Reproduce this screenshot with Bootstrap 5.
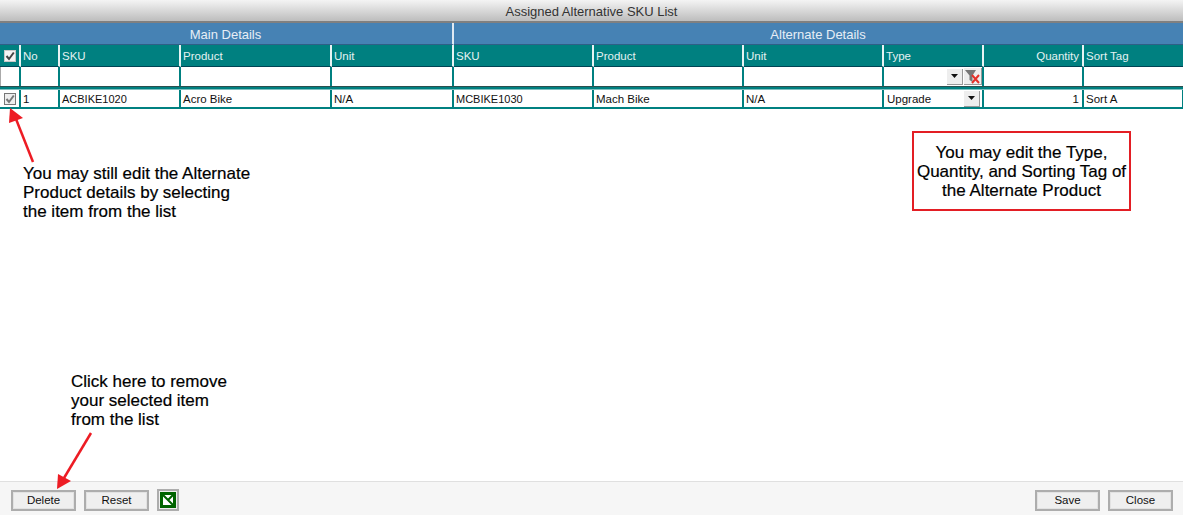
<!DOCTYPE html>
<html lang="en">
<head>
<meta charset="utf-8">
<title>Assigned Alternative SKU List</title>
<link rel="stylesheet" href="https://cdn.jsdelivr.net/npm/bootstrap@5.3.0/dist/css/bootstrap.min.css">
<style>
html,body{height:100%;margin:0}
body{width:1183px;height:515px;overflow:hidden;position:relative;background:#fff;font-family:"Liberation Sans",Arial,sans-serif;font-size:11.5px;color:#111}
.wnd-title{height:23px;background:linear-gradient(#f4f4f4,#bdbdbd);border-bottom:2px solid #808080;color:#333;font-size:13px;line-height:24px;text-align:center;box-sizing:border-box}
.sku-grid{width:1183px;table-layout:fixed;border-collapse:separate;border-spacing:0;line-height:14px}
.sku-grid th,.sku-grid td{padding:0 3px 0 2px;font-weight:400;overflow:hidden;white-space:nowrap;box-sizing:border-box;vertical-align:middle}
.sku-grid .band th{height:22px;padding-top:2px;background:#4682b4;color:#e6eef6;font-size:13px;text-align:center;border-right:2px solid #dfe9f2;border-bottom:1px solid #2f5f86}
.sku-grid .band th:last-child{border-right:0}
.sku-grid .heads th{height:22px;background:#008080;color:#e4f2f2;border-right:2px solid #e8f3f3;border-bottom:1px solid #045}
.sku-grid .heads th:last-child{border-right:0}
.sku-grid .heads th.cell-flush{padding:0}
.filters td{height:19px;background:#fff;border-right:2px solid #008080}
.filters td:last-child{border-right:0}
.filters td:first-child{border-left:1px solid #aaa}
.gap td{height:4px;background:#008080;border-top:1px solid #2b4f4f;border-bottom:1px solid #7fbfbf}
.sku-grid .gap td{padding:0}
.sku-grid .items td{height:19px;padding-top:1px;border-right:2px solid #008080;border-bottom:2px solid #008080}
.sku-grid .items td:last-child{border-right:1px solid #008080}
.sku-grid .cell-flush,.sku-grid .items td.cell-flush{padding:0}
.tick{display:block;width:12px;height:12px;margin:0 auto;border:1px solid #777;background:#eee}
.tick svg{display:block}
.heads .tick{background:#f4f4f4;border-color:#c8c8c8}
.combo{display:flex;justify-content:flex-end;align-items:center;gap:1px;height:100%}
.type-row{display:flex;align-items:center;justify-content:space-between;padding:0 2px 0 3px}
.drop{width:16px;height:16px;background:#eee;border-right:1px solid #999;border-bottom:1px solid #999;display:flex;align-items:center;justify-content:center}
.drop-wide{width:18px;height:17px}
.drop svg{display:block}
.txt-r{text-align:right}
.sku-code{font-size:11px}
.note{position:absolute;font-size:17px;line-height:19px;color:#000;margin:0;-webkit-text-stroke:.2px #000}
.note-a{left:23px;top:164px;width:232px}
.note-b{left:71px;top:372px;width:165px}
.note-c{left:912px;top:131px;width:219px;height:80px;border:2px solid #e31e24;text-align:center;padding-top:10px;background:#fff}
.arrow{position:absolute;left:0;top:0;pointer-events:none}
.foot{position:absolute;left:0;right:0;bottom:0;height:34px;background:#f6f6f6;border-top:1px solid #e0e0e0;padding:8px 10px 0 11px;box-sizing:border-box}
.foot-btn{width:65px;height:21px;padding:0;font-size:11.5px;line-height:17px;color:#111;background:#efefef;border:2px solid #adadad;border-radius:0;box-shadow:inset 0 0 0 1px #e2e2e2}
.xl-btn{width:22px;height:22px;padding:0;background:#efefef;border:2px solid #adadad;border-radius:0;display:flex;align-items:center;justify-content:center;margin-top:-1px}
</style>
</head>
<body>
<div class="wnd-title">Assigned Alternative SKU List</div>
<table class="sku-grid">
<colgroup>
<col style="width:21px"><col style="width:39px"><col style="width:121px"><col style="width:151px"><col style="width:122px"><col style="width:140px"><col style="width:150px"><col style="width:140px"><col style="width:100px"><col style="width:100px"><col style="width:99px">
</colgroup>
<tr class="band"><th colspan="5">Main Details</th><th colspan="6">Alternate Details</th></tr>
<tr class="heads">
<th class="cell-flush"><span class="tick"><svg width="10" height="10" viewBox="0 0 10 10"><path d="M1.500 5 4 8 8.800 1.500" fill="none" stroke="#444" stroke-width="2"/></svg></span></th>
<th>No</th><th>SKU</th><th>Product</th><th>Unit</th><th>SKU</th><th>Product</th><th>Unit</th><th>Type</th><th class="txt-r">Quantity</th><th>Sort Tag</th>
</tr>
<tr class="filters">
<td></td><td></td><td></td><td></td><td></td><td></td><td></td><td></td>
<td class="cell-flush"><div class="combo"><span class="drop"><svg width="7" height="4" viewBox="0 0 7 4"><path d="M0 0h7L3.500 4z" fill="#111"/></svg></span><span class="drop drop-wide"><svg width="16" height="15" viewBox="0 0 16 15"><path d="M0 1h11L7.500 6.500V13L4.500 11V6.500z" fill="#777"/><path d="M7 6l7 8M14 6l-7 8" stroke="#e5312a" stroke-width="2"/></svg></span></div></td>
<td></td><td></td>
</tr>
<tr class="gap"><td colspan="11"></td></tr>
<tr class="items">
<td class="cell-flush"><span class="tick"><svg width="10" height="10" viewBox="0 0 10 10"><path d="M1.500 5 4 8 8.800 1.500" fill="none" stroke="#777" stroke-width="2"/></svg></span></td>
<td>1</td><td class="sku-code">ACBIKE1020</td><td>Acro Bike</td><td>N/A</td><td class="sku-code">MCBIKE1030</td><td>Mach Bike</td><td>N/A</td>
<td class="cell-flush"><div class="type-row">Upgrade<span class="drop"><svg width="7" height="4" viewBox="0 0 7 4"><path d="M0 0h7L3.500 4z" fill="#111"/></svg></span></div></td>
<td class="txt-r">1</td><td>Sort A</td>
</tr>
</table>

<p class="note note-a">You may still edit the Alternate Product details by selecting the item from the list</p>
<p class="note note-b">Click here to remove your selected item from the list</p>
<p class="note note-c">You may edit the Type, Quantity, and Sorting Tag of the Alternate Product</p>

<div class="foot d-flex">
<button class="btn foot-btn me-2" type="button">Delete</button>
<button class="btn foot-btn me-2" type="button">Reset</button>
<button class="btn xl-btn" type="button" aria-label="Export to Excel"><svg width="16" height="16" viewBox="0 0 16 16"><rect width="16" height="16" fill="#006400"/><rect x="3" y="3" width="10" height="10" fill="#fff"/><path d="M3 3l10 10M13 3 8 8" stroke="#006400" stroke-width="2"/></svg></button>
<div class="ms-auto d-flex gap-2">
<button class="btn foot-btn" type="button">Save</button>
<button class="btn foot-btn" type="button">Close</button>
</div>
</div>

<svg class="arrow" width="1183" height="515" viewBox="0 0 1183 515">
<path d="M33 162 16 119" stroke="#ed1c24" stroke-width="2.500" fill="none"/>
<path d="M10 108 23 118 9 123z" fill="#ed1c24"/>
<path d="M91 433 64 478" stroke="#ed1c24" stroke-width="2.500" fill="none"/>
<path d="M57 489 58 474 71 481z" fill="#ed1c24"/>
</svg>
<script src="https://cdn.jsdelivr.net/npm/bootstrap@5.3.0/dist/js/bootstrap.bundle.min.js"></script>
</body>
</html>
